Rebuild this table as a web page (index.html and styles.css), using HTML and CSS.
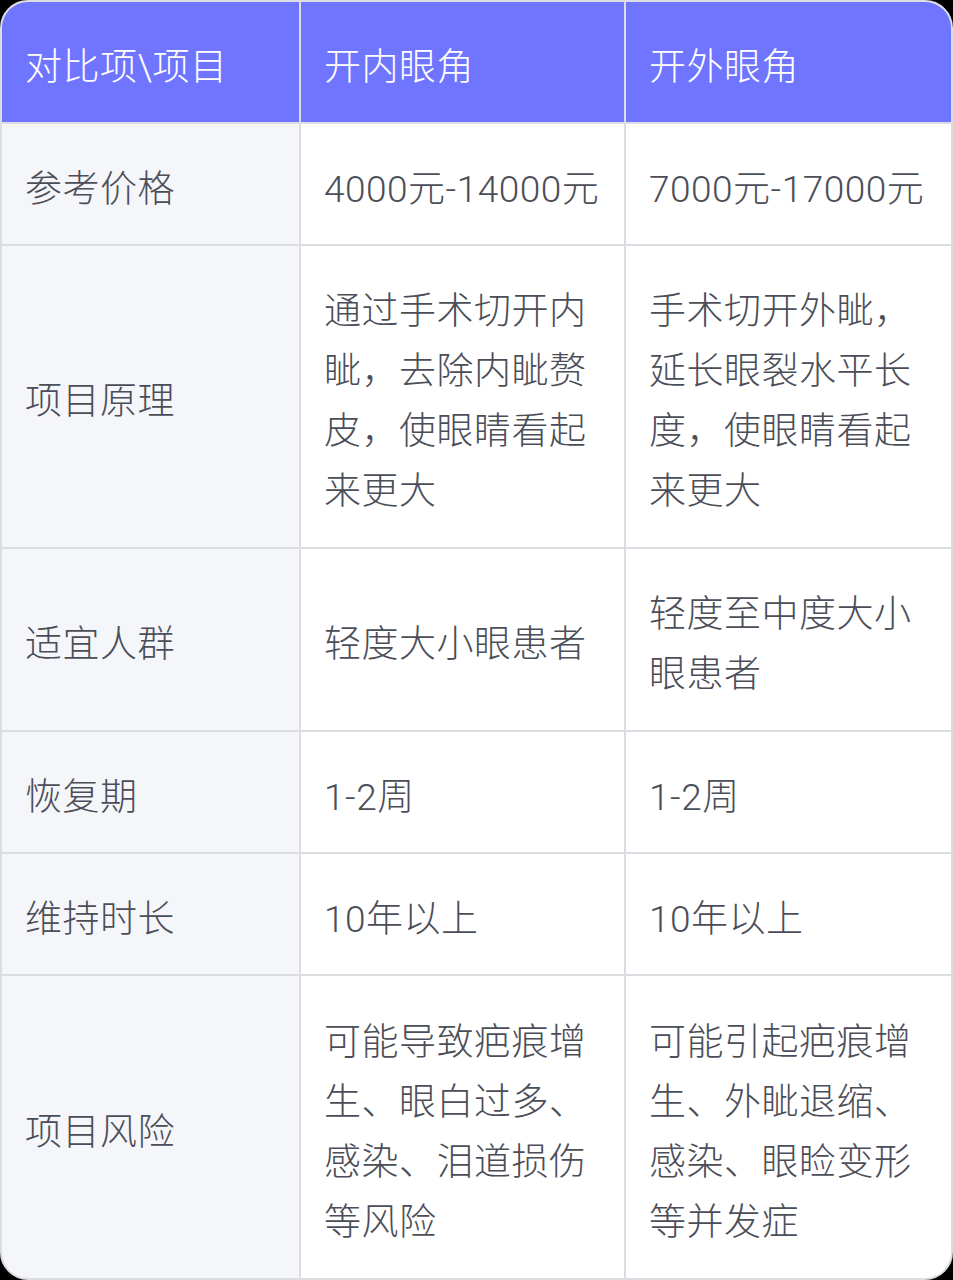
FILE: index.html
```html
<!DOCTYPE html>
<html lang="zh">
<head>
<meta charset="utf-8">
<link rel="stylesheet" href="styles.css">
</head>
<body>
<div class="table">
  <div class="cell head">对比项\项目</div>
  <div class="cell head">开内眼角</div>
  <div class="cell head">开外眼角</div>

  <div class="cell label">参考价格</div>
  <div class="cell">4000元-14000元</div>
  <div class="cell">7000元-17000元</div>

  <div class="cell label">项目原理</div>
  <div class="cell">通过手术切开内眦，去除内眦赘皮，使眼睛看起来更大</div>
  <div class="cell">手术切开外眦，延长眼裂水平长度，使眼睛看起来更大</div>

  <div class="cell label">适宜人群</div>
  <div class="cell">轻度大小眼患者</div>
  <div class="cell">轻度至中度大小眼患者</div>

  <div class="cell label">恢复期</div>
  <div class="cell">1-2周</div>
  <div class="cell">1-2周</div>

  <div class="cell label">维持时长</div>
  <div class="cell">10年以上</div>
  <div class="cell">10年以上</div>

  <div class="cell label">项目风险</div>
  <div class="cell">可能导致疤痕增生、眼白过多、感染、泪道损伤等风险</div>
  <div class="cell">可能引起疤痕增生、外眦退缩、感染、眼睑变形等并发症</div>
</div>
</body>
</html>
```

FILE: styles.css
```css
html, body {
  margin: 0;
  padding: 0;
  background: #000;
}
.table {
  width: 953px;
  height: 1280px;
  box-sizing: border-box;
  display: grid;
  grid-template-columns: 297px 323px 325px;
  grid-template-rows: 120px 120px 301px 181px 120px 120px 1fr;
  gap: 2px;
  border: 2px solid #dcdde3;
  background: #dcdde3;
  border-radius: 28px;
  overflow: hidden;
  font-family: Roboto, "Noto Sans CJK SC", "Noto Sans", sans-serif;
  font-weight: 300;
}
.cell {
  background: #fff;
  color: #4b4e58;
  font-size: 37px;
  letter-spacing: 0.5px;
  line-height: 60px;
  padding: 11px 20px 0 23px;
  display: flex;
  align-items: center;
}
.cell.label {
  background: #f5f6fa;
}
.cell.head {
  background: #7075ff;
  color: #fff;
}
```
